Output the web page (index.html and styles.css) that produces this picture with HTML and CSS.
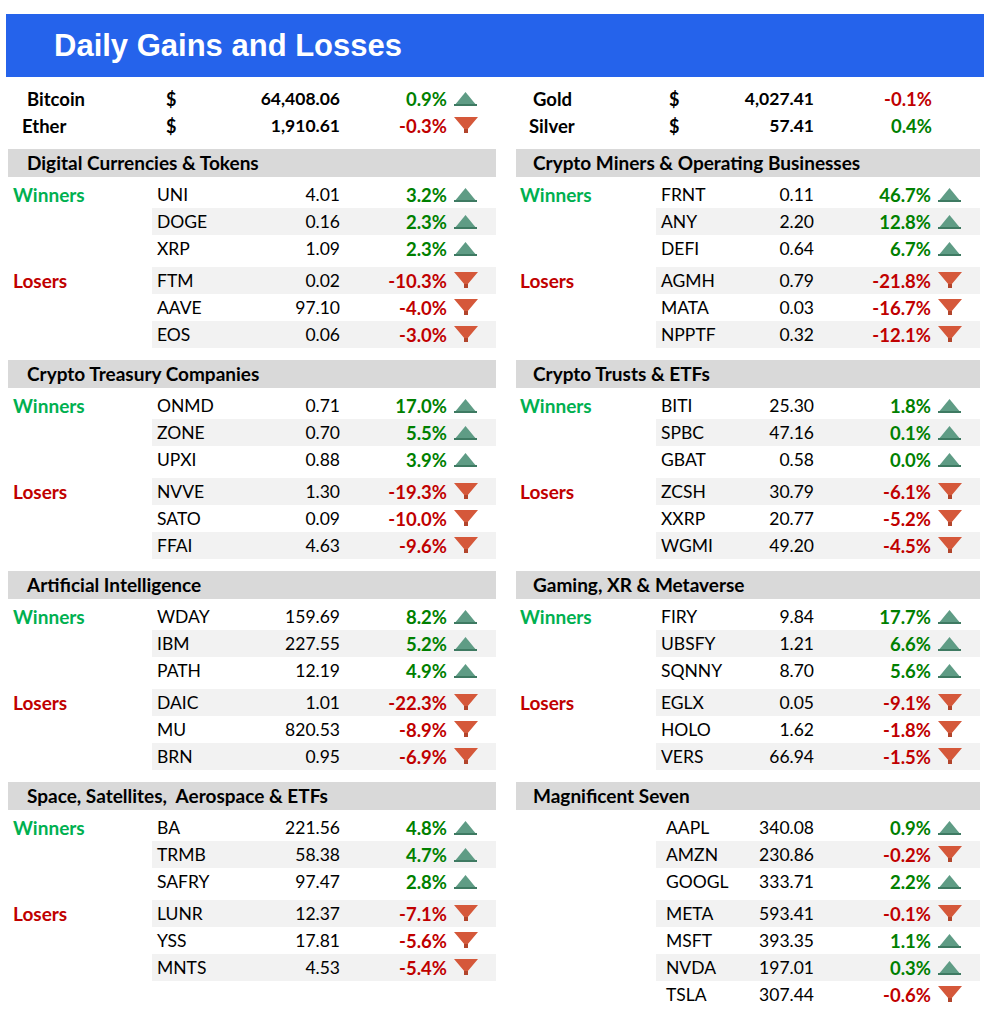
FILE: index.html
```html
<!DOCTYPE html>
<html>
<head>
<meta charset="utf-8">
<link rel="stylesheet" href="styles.css">
</head>
<body>
<div class="page">
  <header class="title">Daily Gains and Losses</header>

  <div class="spot">
    <div class="spot-col left">
      <div class="spot-row">
        <span class="s-name pad-btc">Bitcoin</span><span class="s-cur">$</span><span class="s-val">64,408.06</span><span class="s-pct up">0.9%</span>
        <span class="s-arrow"><svg class="tri" viewBox="0 0 23 14"><polygon points="0,14 11.5,0 23,14" fill="#5f9c85"/><rect y="12" width="23" height="2" fill="#3e7a62"/></svg></span>
      </div>
      <div class="spot-row">
        <span class="s-name pad-eth">Ether</span><span class="s-cur">$</span><span class="s-val">1,910.61</span><span class="s-pct down">-0.3%</span>
        <span class="s-arrow"><svg class="tri-d" viewBox="0 0 24 17"><polygon points="0,0 24,0 13,13 13,16 11,16 11,13" fill="#d5583a"/><rect x="10" y="12" width="4" height="4" fill="#b2452c"/></svg></span>
      </div>
    </div>
    <div class="spot-col right">
      <div class="spot-row">
        <span class="s-name pad-gold">Gold</span><span class="s-cur">$</span><span class="s-val">4,027.41</span><span class="s-pct down">-0.1%</span><span class="s-arrow"></span>
      </div>
      <div class="spot-row">
        <span class="s-name pad-silver">Silver</span><span class="s-cur">$</span><span class="s-val">57.41</span><span class="s-pct up">0.4%</span><span class="s-arrow"></span>
      </div>
    </div>
  </div>

  <main class="grid" id="grid"></main>
</div>
<script src="app.js"></script>
</body>
</html>
```

FILE: app.js
```js
const UP = '<svg class="tri" viewBox="0 0 23 14"><polygon points="0,14 11.5,0 23,14" fill="#5f9c85"/><rect y="12" width="23" height="2" fill="#3e7a62"/></svg>';
const DOWN = '<svg class="tri-d" viewBox="0 0 24 17"><polygon points="0,0 24,0 13,13 13,16 11,16 11,13" fill="#d5583a"/><rect x="10" y="12" width="4" height="4" fill="#b2452c"/></svg>';

const sections = [
  { side: "left", title: "Digital Currencies &amp; Tokens",
    groups: [
      { label: "Winners", cls: "win", rows: [["UNI","4.01","3.2%"],["DOGE","0.16","2.3%"],["XRP","1.09","2.3%"]] },
      { label: "Losers", cls: "lose", rows: [["FTM","0.02","-10.3%"],["AAVE","97.10","-4.0%"],["EOS","0.06","-3.0%"]] } ] },
  { side: "right", title: "Crypto Miners &amp; Operating Businesses",
    groups: [
      { label: "Winners", cls: "win", rows: [["FRNT","0.11","46.7%"],["ANY","2.20","12.8%"],["DEFI","0.64","6.7%"]] },
      { label: "Losers", cls: "lose", rows: [["AGMH","0.79","-21.8%"],["MATA","0.03","-16.7%"],["NPPTF","0.32","-12.1%"]] } ] },
  { side: "left", title: "Crypto Treasury Companies",
    groups: [
      { label: "Winners", cls: "win", rows: [["ONMD","0.71","17.0%"],["ZONE","0.70","5.5%"],["UPXI","0.88","3.9%"]] },
      { label: "Losers", cls: "lose", rows: [["NVVE","1.30","-19.3%"],["SATO","0.09","-10.0%"],["FFAI","4.63","-9.6%"]] } ] },
  { side: "right", title: "Crypto Trusts &amp; ETFs",
    groups: [
      { label: "Winners", cls: "win", rows: [["BITI","25.30","1.8%"],["SPBC","47.16","0.1%"],["GBAT","0.58","0.0%"]] },
      { label: "Losers", cls: "lose", rows: [["ZCSH","30.79","-6.1%"],["XXRP","20.77","-5.2%"],["WGMI","49.20","-4.5%"]] } ] },
  { side: "left", title: "Artificial Intelligence",
    groups: [
      { label: "Winners", cls: "win", rows: [["WDAY","159.69","8.2%"],["IBM","227.55","5.2%"],["PATH","12.19","4.9%"]] },
      { label: "Losers", cls: "lose", rows: [["DAIC","1.01","-22.3%"],["MU","820.53","-8.9%"],["BRN","0.95","-6.9%"]] } ] },
  { side: "right", title: "Gaming, XR &amp; Metaverse",
    groups: [
      { label: "Winners", cls: "win", rows: [["FIRY","9.84","17.7%"],["UBSFY","1.21","6.6%"],["SQNNY","8.70","5.6%"]] },
      { label: "Losers", cls: "lose", rows: [["EGLX","0.05","-9.1%"],["HOLO","1.62","-1.8%"],["VERS","66.94","-1.5%"]] } ] },
  { side: "left", title: "Space, Satellites,&nbsp; Aerospace &amp; ETFs",
    groups: [
      { label: "Winners", cls: "win", rows: [["BA","221.56","4.8%"],["TRMB","58.38","4.7%"],["SAFRY","97.47","2.8%"]] },
      { label: "Losers", cls: "lose", rows: [["LUNR","12.37","-7.1%"],["YSS","17.81","-5.6%"],["MNTS","4.53","-5.4%"]] } ] },
  { side: "right", title: "Magnificent Seven", mag: true,
    groups: [
      { label: "", cls: "", rows: [["AAPL","340.08","0.9%"],["AMZN","230.86","-0.2%"],["GOOGL","333.71","2.2%"]] },
      { label: "", cls: "", rows: [["META","593.41","-0.1%"],["MSFT","393.35","1.1%"],["NVDA","197.01","0.3%"],["TSLA","307.44","-0.6%"]] } ] }
];

const grid = document.getElementById("grid");
sections.forEach(s => {
  let idx = 0;
  let html = `<section class="sec ${s.side}${s.mag ? " mag" : ""}"><h2 class="sec-head">${s.title}</h2>`;
  s.groups.forEach(g => {
    html += `<div class="group"><div class="label ${g.cls}">${g.label}</div><div class="rows">`;
    g.rows.forEach(r => {
      idx++;
      const neg = r[2].startsWith("-");
      html += `<div class="row${idx % 2 === 0 ? " band" : ""}"><span class="tk">${r[0]}</span><span class="val">${r[1]}</span><span class="pct ${neg ? "down" : "up"}">${r[2]}</span><span class="arrow">${neg ? DOWN : UP}</span></div>`;
    });
    html += `</div></div>`;
  });
  html += `</section>`;
  grid.insertAdjacentHTML("beforeend", html);
});
```

FILE: styles.css
```css
* { box-sizing: border-box; }
body {
  margin: 0;
  background: #ffffff;
  font-family: Lato, "Open Sans", sans-serif;
  color: #000000;
}
.page {
  width: 992px;
  padding-top: 14px;
}
.title {
  margin: 0 8px 0 6px;
  height: 63px;
  background: #2563eb;
  color: #ffffff;
  font-family: "Liberation Sans", Arial, sans-serif;
  font-weight: bold;
  font-size: 31px;
  line-height: 63px;
  padding-left: 48px;
}

/* spot prices */
.spot {
  display: grid;
  grid-template-columns: 488px 464px;
  column-gap: 20px;
  padding-left: 8px;
  margin-top: 8px;
}
.spot-row {
  display: grid;
  height: 27px;
  align-items: center;
  font-weight: bold;
  font-size: 18px;
}
.spot-col.left .spot-row { grid-template-columns: 158px 40px 134px 107px 49px; }
.spot-col.right .spot-row { grid-template-columns: 153px 40px 105px 118px 48px; }
.s-name { font-size: 18.5px; }
.s-val { text-align: right; font-size: 17.5px; }
.s-pct { text-align: right; font-size: 18.5px; }
.pad-btc { padding-left: 19px; }
.pad-eth { padding-left: 14px; }
.pad-gold { padding-left: 17px; }
.pad-silver { padding-left: 13px; }
.s-arrow, .arrow {
  display: flex;
  align-items: center;
  padding-left: 7px;
}

.up { color: #008000; }
.down { color: #c00000; }

/* sections */
.grid {
  display: grid;
  grid-template-columns: 488px 464px;
  column-gap: 20px;
  row-gap: 12px;
  padding-left: 8px;
  margin-top: 10px;
}
.sec-head {
  margin: 0 0 4px 0;
  height: 28px;
  line-height: 28px;
  background: #d9d9d9;
  font-size: 19px;
  font-weight: bold;
  padding-left: 19px;
}
.sec.right .sec-head { padding-left: 17px; }
.group {
  display: flex;
}
.group + .group { margin-top: 5px; }
.label {
  font-weight: bold;
  font-size: 19px;
  height: 27px;
  line-height: 27px;
  padding-left: 5px;
}
.sec.left .label { width: 144px; }
.sec.right .label { width: 140px; padding-left: 4px; }
.win { color: #00b050; }
.lose { color: #c00000; }
.rows { display: flex; flex-direction: column; }
.row {
  display: grid;
  height: 27px;
  align-items: center;
  font-size: 17.5px;
}
.sec.left .row { grid-template-columns: 100px 88px 107px 49px; }
.sec.right .row { grid-template-columns: 90px 68px 117px 49px; }
.row.band { background: #f2f2f2; }
.tk { padding-left: 5px; }
.sec.mag .tk { padding-left: 10px; }
.val { text-align: right; }
.pct { text-align: right; font-weight: bold; font-size: 18.5px; }
.tri { width: 23px; height: 14px; display: block; }
.tri-d { width: 24px; height: 17px; display: block; }
```
